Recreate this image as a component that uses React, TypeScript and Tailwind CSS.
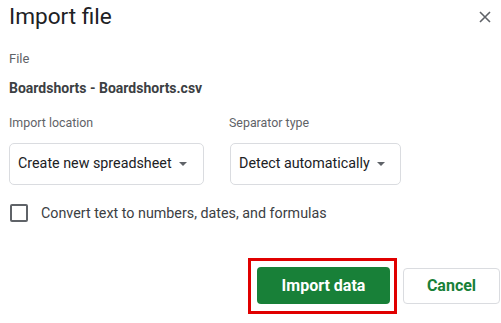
import React from "react";

function Caret() {
  return (
    <svg width="8" height="4" viewBox="0 0 8 4" className="shrink-0">
      <path d="M0 0 L8 0 L4 4 Z" fill="#5f6368" />
    </svg>
  );
}

function Select({ value, width }: { value: string; width: string }) {
  return (
    <div
      className={`${width} flex h-[42px] items-center gap-[7px] rounded-[5px] border border-[#dadce0] bg-white pl-[8px] text-[14.3px] text-[#202124]`}
    >
      <span className="whitespace-nowrap">{value}</span>
      <Caret />
    </div>
  );
}

export default function App() {
  return (
    <div
      className="h-[323px] w-[501px] overflow-hidden bg-white pl-[9px]"
      style={{ fontFamily: "Roboto, 'Liberation Sans', sans-serif" }}
    >
      <div className="flex items-start justify-between pr-[10px] pt-[3px]">
        <h1 className="text-[22.6px] leading-[28px] text-[#202124]">Import file</h1>
        <svg width="12" height="12" viewBox="0 0 12 12" className="mt-[8px]">
          <path d="M1 1 L11 11 M11 1 L1 11" stroke="#5f6368" strokeWidth="1.6" />
        </svg>
      </div>

      <p className="mt-[20px] text-[13px] leading-[16px] text-[#5f6368]">File</p>
      <p className="mt-[11px] text-[14px] font-bold leading-[20px] text-[#3c4043]">
        Boardshorts - Boardshorts.csv
      </p>

      <div className="mt-[17px] flex gap-[26px]">
        <div>
          <p className="text-[12.4px] leading-[16px] text-[#5f6368]">Import location</p>
          <div className="mt-[12px]">
            <Select value="Create new spreadsheet" width="w-[195px]" />
          </div>
        </div>
        <div>
          <p className="-ml-[1px] text-[12.4px] leading-[16px] text-[#5f6368]">Separator type</p>
          <div className="mt-[12px]">
            <Select value="Detect automatically" width="w-[171px]" />
          </div>
        </div>
      </div>

      <div className="mt-[19px] flex items-center gap-[13px] pl-[1px]">
        <div className="h-[18px] w-[18px] rounded-[2px] border-2 border-[#5f6368]" />
        <span className="text-[14.3px] leading-[18px] text-[#3c4043]">
          Convert text to numbers, dates, and formulas
        </span>
      </div>

      <div className="mt-[36px] flex items-center justify-end gap-[6px] pr-[1px]">
        <div className="border-[3px] border-[#e00000] pb-[7px] pl-[6px] pr-[4px] pt-[6px]">
          <button className="flex h-[37px] w-[133px] items-center justify-center rounded-[4px] bg-[#188038] text-[16px] font-bold text-white">
            Import data
          </button>
        </div>
        <button className="flex h-[36px] w-[97px] items-center justify-center rounded-[4px] border border-[#dadce0] bg-white text-[16px] font-bold text-[#188038]">
          Cancel
        </button>
      </div>
    </div>
  );
}
